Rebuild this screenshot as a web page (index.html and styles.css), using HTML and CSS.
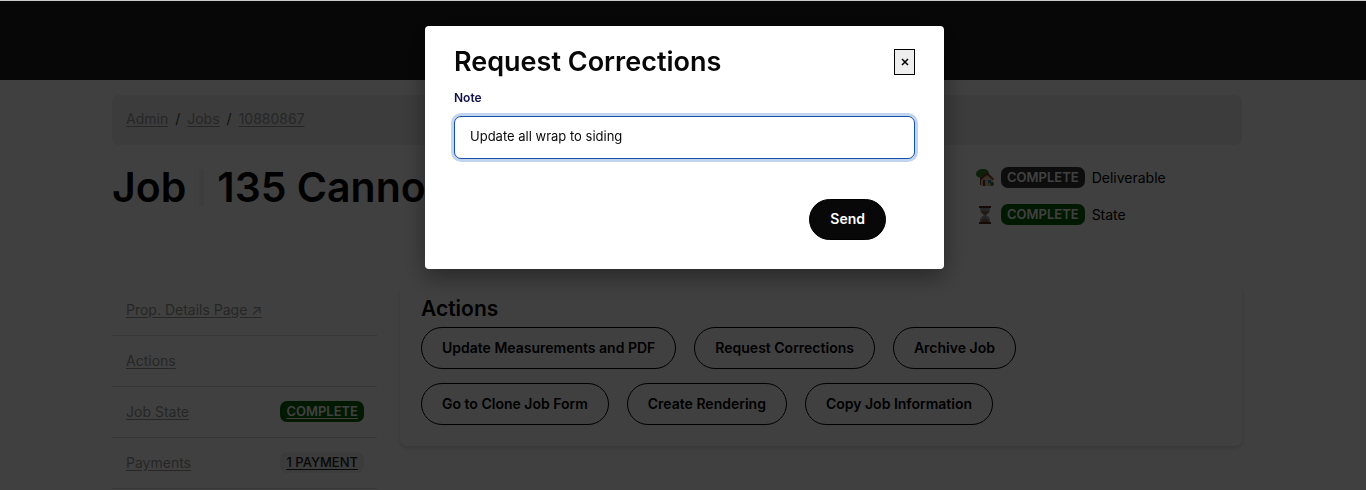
FILE: index.html
```
<!DOCTYPE html>
<html lang="en">
<head>
    <meta charset="utf-8">
    <meta name="viewport" content="width=device-width, initial-scale=1">
    <title>Job 10880867</title>
    <link rel="stylesheet" href="styles.css">
</head>
<body>
    <header class="topbar"></header>
    <main class="container">
        <nav class="breadcrumb">
            <a href="#">Admin</a>
            <span>/</span>
            <a href="#">Jobs</a>
            <span>/</span>
            <a href="#">10880867</a>
        </nav>

        <section class="job-header">
            <h1>Job <span class="divider"></span> 135 Cannon</h1>
            <ul class="status-list">
                <li>
                    <!-- house -->
                    <svg class="status-icon" viewBox="0 0 18 18">
                        <path d="M4 8h2v8H4z" fill="#6a4020"/>
                        <path d="M0 5C0 2 3 0 7 0s6 2 6 5-3 4-6 4-7-1-7-4z" fill="#3f8028"/>
                        <path d="M5 10l6-6 6 5v8H5z" fill="#d0c0a0"/>
                        <path d="M4 10l6-6h2l6 6-1 1-6-5-6 5z" fill="#8a3020"/>
                        <path d="M7 11h2v6H7z" fill="#703818"/>
                        <path d="M12 11h3v3h-3z" fill="#3a78b0"/>
                        <circle cx="16" cy="15" r="2" fill="#3f8028"/>
                    </svg>
                    <span class="badge badge-dark">COMPLETE</span>
                    Deliverable
                </li>
                <li>
                    <!-- hourglass -->
                    <svg class="status-icon" viewBox="0 0 18 18">
                        <path d="M4 2h10c0 4-1 5-4 7 3 2 4 3 4 7H4c0-4 1-5 4-7-3-2-4-3-4-7z" fill="#94989c"/>
                        <path d="M5 5h8c-1 2-2 3-4 4-2-1-3-2-4-4zM5 16c1-3 3-3 4-4 1 1 3 1 4 4z" fill="#906040"/>
                        <path d="M3 0h12v2H3zM3 16h12v2H3z" fill="#502818"/>
                    </svg>
                    <span class="badge badge-green">COMPLETE</span>
                    State
                </li>
            </ul>
        </section>

        <div class="job-body">
            <ul class="sidebar">
                <li><a href="#">Prop. Details Page <span class="arrow">↗</span></a></li>
                <li><a href="#">Actions</a></li>
                <li><a href="#">Job State</a> <a class="badge badge-green" href="#">COMPLETE</a></li>
                <li><a href="#">Payments</a> <a class="badge badge-light" href="#">1 PAYMENT</a></li>
            </ul>
            <section class="panel">
                <h2>Actions</h2>
                <div class="actions">
                    <button type="button" class="btn">Update Measurements and PDF</button>
                    <button type="button" class="btn">Request Corrections</button>
                    <button type="button" class="btn">Archive Job</button>
                    <button type="button" class="btn">Go to Clone Job Form</button>
                    <button type="button" class="btn">Create Rendering</button>
                    <button type="button" class="btn">Copy Job Information</button>
                </div>
            </section>
        </div>
    </main>

    <div class="overlay">
        <form class="modal" role="dialog" aria-labelledby="modalTitle">
            <div class="modal-header">
                <h2 id="modalTitle">Request Corrections</h2>
                <button type="button" class="close" aria-label="Close">
                    <svg viewBox="0 0 8 8"><path d="M1 1l6 6M7 1L1 7" stroke="currentColor" stroke-width="1.5"/></svg>
                </button>
            </div>
            <label for="note">Note</label>
            <input class="note" id="note" type="text" value="Update all wrap to siding">
            <div class="modal-footer">
                <button type="submit" class="btn btn-send">Send</button>
            </div>
        </form>
    </div>
</body>
</html>
```
FILE: styles.css
```
* {
    box-sizing: border-box;
}
body {
    margin: 0;
    border-top: 1px solid #c8ccc8;
    font-family: Inter, "Liberation Sans", sans-serif;
    font-size: 14px;
    line-height: 20px;
    color: #000;
    background: #fff;
    overflow: hidden;
}
h1, h2, ul {
    margin: 0;
    padding: 0;
}
ul {
    list-style: none;
}
a {
    color: #999;
    text-underline-offset: 2px;
}
.topbar {
    height: 79px;
    background: #1c1c1c;
}
.container {
    width: calc(100% - 236px);
    margin-left: 112px;
    padding-top: 15px;
}

.breadcrumb {
    display: flex;
    gap: 7px;
    padding: 14px 14px 16px;
    border-radius: 7px;
    background: #eee;
}
.breadcrumb span {
    color: #444;
}

.job-header {
    display: flex;
    justify-content: space-between;
    min-height: 140px;
    padding-top: 22px;
}
h1 {
    display: flex;
    align-items: center;
    gap: 13px;
    height: 40px;
    font-size: 41px;
    font-weight: 600;
}
.divider {
    width: 5px;
    height: 37px;
    background: #f4f4f4;
}
.status-list {
    width: 266px;
}
.status-list li {
    display: flex;
    align-items: center;
    gap: 7px;
    margin-bottom: 16px;
}
.status-icon {
    width: 18px;
    height: 18px;
}
.badge {
    padding: 0 6px;
    border-radius: 7px;
    font-size: 13px;
    font-weight: 600;
    line-height: 21px;
    color: #fff;
}
.badge-dark {
    background: #343434;
}
.badge-green {
    background: #006400;
}
.badge-light {
    background: #eee;
    color: #222;
    font-weight: 500;
}

.job-body {
    display: flex;
    gap: 23px;
}
.sidebar {
    width: 265px;
}
.sidebar li {
    display: flex;
    align-items: center;
    justify-content: space-between;
    height: 51px;
    padding: 0 13px 1px 14px;
    border-bottom: 1px solid #d8d8d8;
}

.panel {
    flex: 1;
    align-self: flex-start;
    padding: 14px 21px 21px;
    border-radius: 7px;
    box-shadow: 0 2px 4px rgba(0, 0, 0, 0.15);
}
.panel h2 {
    margin-bottom: 8px;
    font-size: 21px;
    font-weight: 600;
}
.actions {
    display: flex;
    flex-wrap: wrap;
    gap: 14px 18px;
    max-width: 640px;
}
.btn {
    height: 42px;
    padding: 0 20px 2px;
    border: 1px solid #000;
    border-radius: 21px;
    background: transparent;
    color: #000;
    font-family: inherit;
    font-size: 14px;
    font-weight: 600;
}

.overlay {
    position: fixed;
    top: 1px;
    right: 0;
    bottom: 0;
    left: 0;
    padding-left: 3px;
    background: rgba(0, 0, 0, 0.75);
}
.modal {
    max-width: 519px;
    margin: 25px auto 0;
    padding: 22px 29px 29px;
    border-radius: 4px;
    background: #fff;
    box-shadow: 0 8px 24px rgba(0, 0, 0, 0.4);
}
.modal-header {
    display: flex;
    align-items: center;
    justify-content: space-between;
}
.modal-header h2 {
    font-size: 27px;
    font-weight: 600;
    line-height: 28px;
    color: #080808;
}
.close {
    display: flex;
    align-items: center;
    justify-content: center;
    width: 21px;
    height: 26px;
    padding: 0;
    border: 1px solid #000;
    background: #eee;
    color: #000;
}
.close svg {
    width: 8px;
    height: 8px;
}
.modal label {
    display: block;
    margin: 12px 0 8px;
    font-size: 12px;
    font-weight: 600;
    color: #10104a;
}
.note {
    width: 100%;
    height: 43px;
    padding: 0 15px 3px;
    border: 1px solid #1450a4;
    border-radius: 7px;
    outline: none;
    box-shadow: 0 0 0 3px #c2d4f0;
    color: #080808;
    font-family: inherit;
    font-size: 13px;
}
.modal-footer {
    display: flex;
    justify-content: flex-end;
    padding: 40px 29px 0 0;
}
.btn-send {
    height: 41px;
    background: #080808;
    color: #fff;
}
```
